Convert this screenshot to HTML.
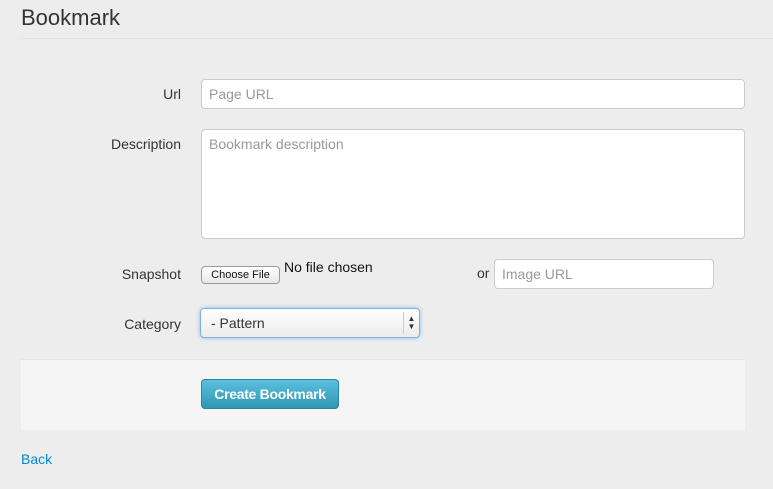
<!DOCTYPE html>
<html><head><style>
body{margin:0;width:773px;height:489px;background:#ededed;font-family:"Liberation Sans",sans-serif;position:relative;overflow:hidden;color:#333}
.a{position:absolute}
h1{position:absolute;left:21px;top:5px;margin:0;font-size:22px;font-weight:normal;color:#333}
.hr{left:21px;top:38px;width:752px;height:1px;background:#e2e2e2}
.lbl{font-size:14px;color:#333;text-align:right;width:160px;left:21px}
.inp{background:#fff;border:1px solid #ccc;border-radius:4px;box-sizing:border-box;font-size:14px;color:#999;padding:0 7px}
</style></head><body>
<h1>Bookmark</h1>
<div class="a hr"></div>
<div class="a lbl" style="top:86px">Url</div>
<div class="a inp" style="left:201px;top:79px;width:544px;height:30px;line-height:28px">Page URL</div>
<div class="a lbl" style="top:136px">Description</div>
<div class="a inp" style="left:201px;top:129px;width:544px;height:110px;line-height:28px">Bookmark description</div>
<div class="a lbl" style="top:266px">Snapshot</div>
<div class="a" style="left:201px;top:266px;width:77px;height:16px;border:1px solid #999;border-radius:4px;background:linear-gradient(#fff,#e8e8e8);font-size:11px;line-height:16px;text-align:center;color:#111">Choose File</div>
<div class="a" style="left:284px;top:259px;font-size:14px;color:#111">No file chosen</div>
<div class="a" style="left:477px;top:265px;font-size:14px">or</div>
<div class="a inp" style="left:494px;top:259px;width:220px;height:30px;line-height:28px">Image URL</div>
<div class="a lbl" style="top:316px">Category</div>
<div class="a" style="left:200px;top:308px;width:220px;height:30px;box-sizing:border-box;border:1px solid #7fb2e0;border-radius:4px;box-shadow:0 0 4px #8bbbe8;background:linear-gradient(#fff,#ececec);font-size:14px;line-height:28px;padding-left:10px;color:#333">- Pattern<span style="position:absolute;right:0;top:3px;width:16px;height:22px;border-left:1px solid #ccc;font-size:8px;line-height:8px;text-align:center;padding-top:3px;box-sizing:border-box">▲<br>▼</span></div>
<div class="a" style="left:21px;top:359px;width:724px;height:70px;background:#f5f5f5;border-top:1px solid #e5e5e5"></div>
<div class="a" style="left:201px;top:379px;width:138px;height:30px;border-radius:4px;background:linear-gradient(#5bc0de,#2f96b4);border:1px solid #2a85a0;box-sizing:border-box;color:#fff;font-size:14px;font-weight:bold;line-height:28px;text-align:center;letter-spacing:-0.3px">Create Bookmark</div>
<div class="a" style="left:21px;top:451px;font-size:14px;color:#0088cc">Back</div>
</body></html>
